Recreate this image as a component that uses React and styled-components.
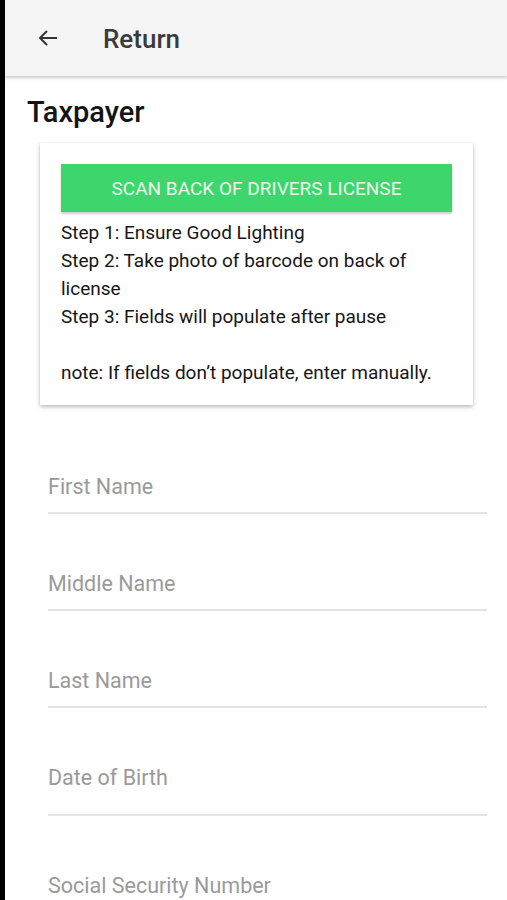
import React from 'react'
import styled, { createGlobalStyle } from 'styled-components'

const GlobalStyle = createGlobalStyle`
  html, body {
    margin: 0;
    padding: 0;
    background: #000;
  }
  * { box-sizing: border-box; }
`;

const Screen = styled.div`
  margin-left: 5px;
  min-height: 900px;
  background: #fff;
  font-family: Roboto, "Noto Sans", sans-serif;
  overflow: hidden;
`;

const Header = styled.div`
  height: 76px;
  background: #f5f5f5;
  display: flex;
  align-items: center;
  padding-left: 29px;
  box-shadow: 0 2px 3px rgba(0, 0, 0, 0.22);
  position: relative;
  z-index: 2;
`;

const BackButton = styled.div`
  width: 28px;
  height: 28px;
  display: flex;
  align-items: center;
  justify-content: center;
  color: #333;
`;

const HeaderTitle = styled.div`
  margin-left: 41px;
  font-size: 26px;
  font-weight: 500;
  color: #3a3a3a;
  line-height: 30px;
  padding-top: 2px;
`;

const SectionTitle = styled.h1`
  margin: 18px 0 0 22px;
  font-size: 29px;
  line-height: 36px;
  font-weight: 500;
  color: #141414;
`;

const Card = styled.div`
  margin: 13px 34px 0 35px;
  padding: 21px 21px 18px 21px;
  background: #fff;
  box-shadow: 0 2px 4px rgba(0, 0, 0, 0.25), 0 0 2px rgba(0, 0, 0, 0.08);
`;

const ScanButton = styled.div`
  height: 48px;
  background: #3dd66c;
  color: #eafbee;
  font-size: 19px;
  text-transform: uppercase;
  display: flex;
  align-items: center;
  justify-content: center;
  box-shadow: 0 2px 2px rgba(0, 0, 0, 0.2);
`;

const Steps = styled.div`
  margin-top: 7px;
  font-size: 19px;
  line-height: 28px;
  color: #161616;
`;

const Line = styled.div`
  min-height: 28px;
`;

const Fields = styled.div`
  margin: 12px 20px 0 43px;
`;

const Field = styled.div`
  padding-top: 58px;
  padding-bottom: ${({ tall }) => (tall ? '24px' : '13px')};
  border-bottom: 2px solid #e3e3e3;
  font-size: 21.5px;
  line-height: 24px;
  color: #9a9a9a;
`;

const Arrow = () => (
  <svg width="24" height="24" viewBox="0 0 24 24" fill="none" stroke="currentColor" strokeWidth="2" strokeLinecap="square">
    <path d="M20 12H5" />
    <path d="M11 5l-7 7 7 7" strokeLinecap="butt" />
  </svg>
);

const App = () => {
  return (
    <Screen>
      <GlobalStyle />
      <Header>
        <BackButton><Arrow /></BackButton>
        <HeaderTitle>Return</HeaderTitle>
      </Header>

      <SectionTitle>Taxpayer</SectionTitle>

      <Card>
        <ScanButton>Scan back of drivers license</ScanButton>
        <Steps>
          <Line>Step 1: Ensure Good Lighting</Line>
          <Line>Step 2: Take photo of barcode on back of license</Line>
          <Line>Step 3: Fields will populate after pause</Line>
          <Line />
          <Line>note: If fields don’t populate, enter manually.</Line>
        </Steps>
      </Card>

      <Fields>
        <Field>First Name</Field>
        <Field>Middle Name</Field>
        <Field>Last Name</Field>
        <Field tall>Date of Birth</Field>
        <Field>Social Security Number</Field>
      </Fields>
    </Screen>
  )
}

export default App
